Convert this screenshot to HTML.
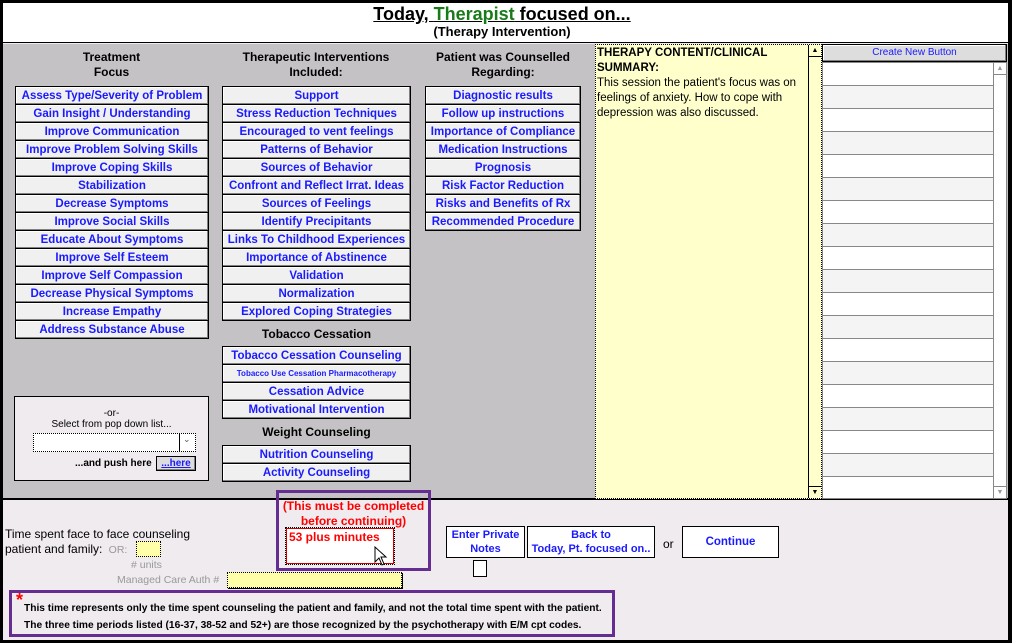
<!DOCTYPE html>
<html><head><meta charset="utf-8"><style>
*{margin:0;padding:0;box-sizing:border-box}
body{width:1012px;height:643px;background:#000;position:relative;overflow:hidden;font-family:"Liberation Sans",Arial,sans-serif}
.a{position:absolute}
#page{position:absolute;left:3px;top:3px;width:1005px;height:637px;background:#efebef}
#hdr{position:absolute;left:3px;top:3px;width:1005px;height:40px;background:#fff;border-bottom:1px solid #000}
#gray{position:absolute;left:3px;top:44px;width:1005px;height:456px;background:#c4c2c4;border-bottom:2px solid #000}
.b{position:absolute;height:19px;background:#f0f0f0;border:1px solid #000;box-shadow:inset -1px -1px 0 #808080,inset 1px 1px 0 #fff;color:#1a1aff;font-weight:bold;font-size:11.5px;text-align:center;line-height:18px;white-space:nowrap;overflow:hidden}
.h{position:absolute;font-weight:bold;font-size:12px;text-align:center;color:#000;line-height:15px}
.row{height:23px;border-bottom:1px solid #888;}
</style></head><body>
<div id="page"></div>
<div id="hdr"></div>
<div class="a" style="left:0;top:4px;width:1004px;text-align:center;font-size:18px;font-weight:bold;text-decoration:underline;line-height:20px">Today, <span style="color:#1a7a1a">Therapist</span> focused on...</div>
<div class="a" style="left:0;top:24px;width:1004px;text-align:center;font-size:13px;font-weight:bold;line-height:16px">(Therapy Intervention)</div>
<div id="gray"></div>

<div class="h" style="left:15px;top:50px;width:193px">Treatment<br>Focus</div>
<div class="h" style="left:222px;top:50px;width:188px">Therapeutic Interventions<br>Included:</div>
<div class="h" style="left:425px;top:50px;width:156px">Patient was Counselled<br>Regarding:</div>

<div class="b" style="left:15px;top:86px;width:194px">Assess Type/Severity of Problem</div>
<div class="b" style="left:15px;top:104px;width:194px">Gain Insight / Understanding</div>
<div class="b" style="left:15px;top:122px;width:194px">Improve Communication</div>
<div class="b" style="left:15px;top:140px;width:194px">Improve Problem Solving Skills</div>
<div class="b" style="left:15px;top:158px;width:194px">Improve Coping Skills</div>
<div class="b" style="left:15px;top:176px;width:194px">Stabilization</div>
<div class="b" style="left:15px;top:194px;width:194px">Decrease Symptoms</div>
<div class="b" style="left:15px;top:212px;width:194px">Improve Social Skills</div>
<div class="b" style="left:15px;top:230px;width:194px">Educate About Symptoms</div>
<div class="b" style="left:15px;top:248px;width:194px">Improve Self Esteem</div>
<div class="b" style="left:15px;top:266px;width:194px">Improve Self Compassion</div>
<div class="b" style="left:15px;top:284px;width:194px">Decrease Physical Symptoms</div>
<div class="b" style="left:15px;top:302px;width:194px">Increase Empathy</div>
<div class="b" style="left:15px;top:320px;width:194px">Address Substance Abuse</div>

<div class="b" style="left:222px;top:86px;width:189px">Support</div>
<div class="b" style="left:222px;top:104px;width:189px">Stress Reduction Techniques</div>
<div class="b" style="left:222px;top:122px;width:189px">Encouraged to vent feelings</div>
<div class="b" style="left:222px;top:140px;width:189px">Patterns of Behavior</div>
<div class="b" style="left:222px;top:158px;width:189px">Sources of Behavior</div>
<div class="b" style="left:222px;top:176px;width:189px">Confront and Reflect Irrat. Ideas</div>
<div class="b" style="left:222px;top:194px;width:189px">Sources of Feelings</div>
<div class="b" style="left:222px;top:212px;width:189px">Identify Precipitants</div>
<div class="b" style="left:222px;top:230px;width:189px">Links To Childhood Experiences</div>
<div class="b" style="left:222px;top:248px;width:189px">Importance of Abstinence</div>
<div class="b" style="left:222px;top:266px;width:189px">Validation</div>
<div class="b" style="left:222px;top:284px;width:189px">Normalization</div>
<div class="b" style="left:222px;top:302px;width:189px">Explored Coping Strategies</div>

<div class="h" style="left:222px;top:327px;width:189px">Tobacco Cessation</div>
<div class="b" style="left:222px;top:346px;width:189px">Tobacco Cessation Counseling</div>
<div class="b" style="left:222px;top:364px;width:189px;font-size:8px">Tobacco Use Cessation Pharmacotherapy</div>
<div class="b" style="left:222px;top:382px;width:189px">Cessation Advice</div>
<div class="b" style="left:222px;top:400px;width:189px">Motivational Intervention</div>
<div class="h" style="left:222px;top:425px;width:189px">Weight Counseling</div>
<div class="b" style="left:222px;top:445px;width:189px">Nutrition Counseling</div>
<div class="b" style="left:222px;top:463px;width:189px">Activity Counseling</div>

<div class="b" style="left:425px;top:86px;width:156px">Diagnostic results</div>
<div class="b" style="left:425px;top:104px;width:156px">Follow up instructions</div>
<div class="b" style="left:425px;top:122px;width:156px">Importance of Compliance</div>
<div class="b" style="left:425px;top:140px;width:156px">Medication Instructions</div>
<div class="b" style="left:425px;top:158px;width:156px">Prognosis</div>
<div class="b" style="left:425px;top:176px;width:156px">Risk Factor Reduction</div>
<div class="b" style="left:425px;top:194px;width:156px">Risks and Benefits of Rx</div>
<div class="b" style="left:425px;top:212px;width:156px">Recommended Procedure</div>

<!-- select box -->
<div class="a" style="left:14px;top:396px;width:195px;height:85px;background:#efebef;border:1px solid #000"></div>
<div class="a" style="left:14px;top:408px;width:195px;text-align:center;font-size:10px">-or-</div>
<div class="a" style="left:14px;top:419px;width:195px;text-align:center;font-size:10px">Select from pop down list...</div>
<div class="a" style="left:33px;top:433px;width:163px;height:19px;background:#fff;border:1px dotted #000"></div>
<div class="a" style="left:179px;top:433px;width:1px;height:19px;background:#000"></div>
<div class="a" style="left:183px;top:434px;font-size:9px;color:#555">&#8964;</div>
<div class="a" style="left:75px;top:458px;font-size:10px;font-weight:bold">...and push here</div>
<div class="a" style="left:156px;top:456px;width:40px;height:15px;background:#ddd;border:1px solid #000;box-shadow:inset -1px -1px 0 #808080;color:#1a1aff;font-size:10px;font-weight:bold;text-align:center;text-decoration:underline;line-height:13px">...here</div>

<!-- summary -->
<div class="a" style="left:595px;top:44px;width:227px;height:455px;background:#ffffcc;border:1px dotted #000"></div>
<div class="a" style="left:597px;top:46px;width:210px;font-size:11.5px;line-height:15px"><b>THERAPY CONTENT/CLINICAL SUMMARY:</b><br>This session the patient's focus was on feelings of anxiety. How to cope with depression was also discussed.</div>
<div class="a" style="left:808px;top:45px;width:13px;height:453px;border-left:1px solid #000;background:#ffffcc"></div>
<div class="a" style="left:808px;top:45px;width:13px;height:12px;border-left:1px solid #000;border-bottom:1px solid #000;font-size:7px;text-align:center;line-height:11px">&#9650;</div>
<div class="a" style="left:808px;top:486px;width:13px;height:12px;border-left:1px solid #000;border-top:1px solid #000;font-size:7px;text-align:center;line-height:11px">&#9660;</div>

<!-- right list -->
<div class="a" style="left:822px;top:44px;width:185px;height:18px;background:#ddd;border:1px solid #000;box-shadow:inset -1px -1px 0 #808080,inset 1px 1px 0 #fff;color:#1a1aff;font-size:10px;text-align:center;line-height:16px">Create New Button</div>
<div class="a" style="left:822px;top:62px;width:185px;height:437px;background:#fff;border:1px solid #888;overflow:hidden">
<div style="width:171px">
<div class="row" style="background:#fff"></div><div class="row" style="background:#f4f4f4"></div><div class="row" style="background:#fff"></div><div class="row" style="background:#f4f4f4"></div><div class="row" style="background:#fff"></div><div class="row" style="background:#f4f4f4"></div><div class="row" style="background:#fff"></div><div class="row" style="background:#f4f4f4"></div><div class="row" style="background:#fff"></div><div class="row" style="background:#f4f4f4"></div><div class="row" style="background:#fff"></div><div class="row" style="background:#f4f4f4"></div><div class="row" style="background:#fff"></div><div class="row" style="background:#f4f4f4"></div><div class="row" style="background:#fff"></div><div class="row" style="background:#f4f4f4"></div><div class="row" style="background:#fff"></div><div class="row" style="background:#f4f4f4"></div><div class="row" style="background:#fff"></div>
</div></div>
<div class="a" style="left:993px;top:63px;width:1px;height:435px;background:#888"></div>
<div class="a" style="left:994px;top:63px;width:12px;height:12px;border-bottom:1px solid #888;font-size:7px;color:#999;text-align:center;line-height:11px">&#9650;</div>
<div class="a" style="left:994px;top:486px;width:12px;height:12px;border-top:1px solid #888;font-size:7px;color:#999;text-align:center;line-height:11px">&#9660;</div>

<!-- bottom -->
<div class="a" style="left:5px;top:527px;font-size:12px;line-height:15px">Time spent face to face counseling<br>patient and family: <span style="color:#999;font-size:10.5px">&nbsp;OR:</span></div>
<div class="a" style="left:136px;top:541px;width:25px;height:16px;background:#ffffaa;border:1px dotted #000"></div>
<div class="a" style="left:131px;top:559px;font-size:10.5px;color:#999">#&nbsp;units</div>
<div class="a" style="left:117px;top:574px;font-size:10.5px;color:#999">Managed Care Auth #</div>
<div class="a" style="left:227px;top:572px;width:175px;height:16px;background:#ffffaa;border:1px dotted #000;box-shadow:1px 1px 0 #000"></div>

<div class="a" style="left:276px;top:490px;width:155px;height:81px;border:3px solid #662d91"></div>
<div class="a" style="left:276px;top:499px;width:155px;text-align:center;color:#f00;font-weight:bold;font-size:12px;line-height:15px">(This must be completed<br>before continuing)</div>
<div class="a" style="left:286px;top:528px;width:108px;height:36px;background:#fff;border:1px solid #c00;outline:1px dotted #000"></div>
<div class="a" style="left:289px;top:530px;color:#f00;font-weight:bold;font-size:12px">53 plus minutes</div>
<svg class="a" style="left:374px;top:546px" width="16" height="22" viewBox="0 0 16 22"><path d="M1 1 L1 16 L5 12 L8 19 L10 18 L7 11 L12 11 Z" fill="#fff" stroke="#000" stroke-width="1"/></svg>

<div class="a" style="left:446px;top:526px;width:79px;height:32px;background:#fff;border:1px solid #000;color:#1a1aff;font-weight:bold;font-size:11px;text-align:center;line-height:14px;padding-top:1px">Enter Private<br>Notes</div>
<div class="a" style="left:473px;top:560px;width:14px;height:17px;background:#fff;border:1px solid #000"></div>
<div class="a" style="left:527px;top:526px;width:128px;height:32px;background:#fff;border:1px solid #000;color:#1a1aff;font-weight:bold;font-size:11px;text-align:center;line-height:14px;padding-top:1px">Back to<br>Today, Pt. focused on..</div>
<div class="a" style="left:663px;top:537px;font-size:12px">or</div>
<div class="a" style="left:682px;top:526px;width:97px;height:32px;background:#fff;border:1px solid #000;color:#1a1aff;font-weight:bold;font-size:11.5px;text-align:center;line-height:30px">Continue</div>

<div class="a" style="left:9px;top:590px;width:606px;height:47px;border:3px solid #662d91"></div>
<div class="a" style="left:16px;top:591px;color:#f00;font-size:18px;font-weight:bold;line-height:18px">*</div>
<div class="a" style="left:24px;top:602px;font-size:10.2px;font-weight:bold;line-height:13px">This time represents only the time spent counseling the patient and family, and not the total time spent with the patient.</div>
<div class="a" style="left:24px;top:619px;font-size:10.2px;font-weight:bold;line-height:13px">The three time periods listed (16-37, 38-52 and 52+) are those recognized by the psychotherapy with E/M cpt codes.</div>
</body></html>
